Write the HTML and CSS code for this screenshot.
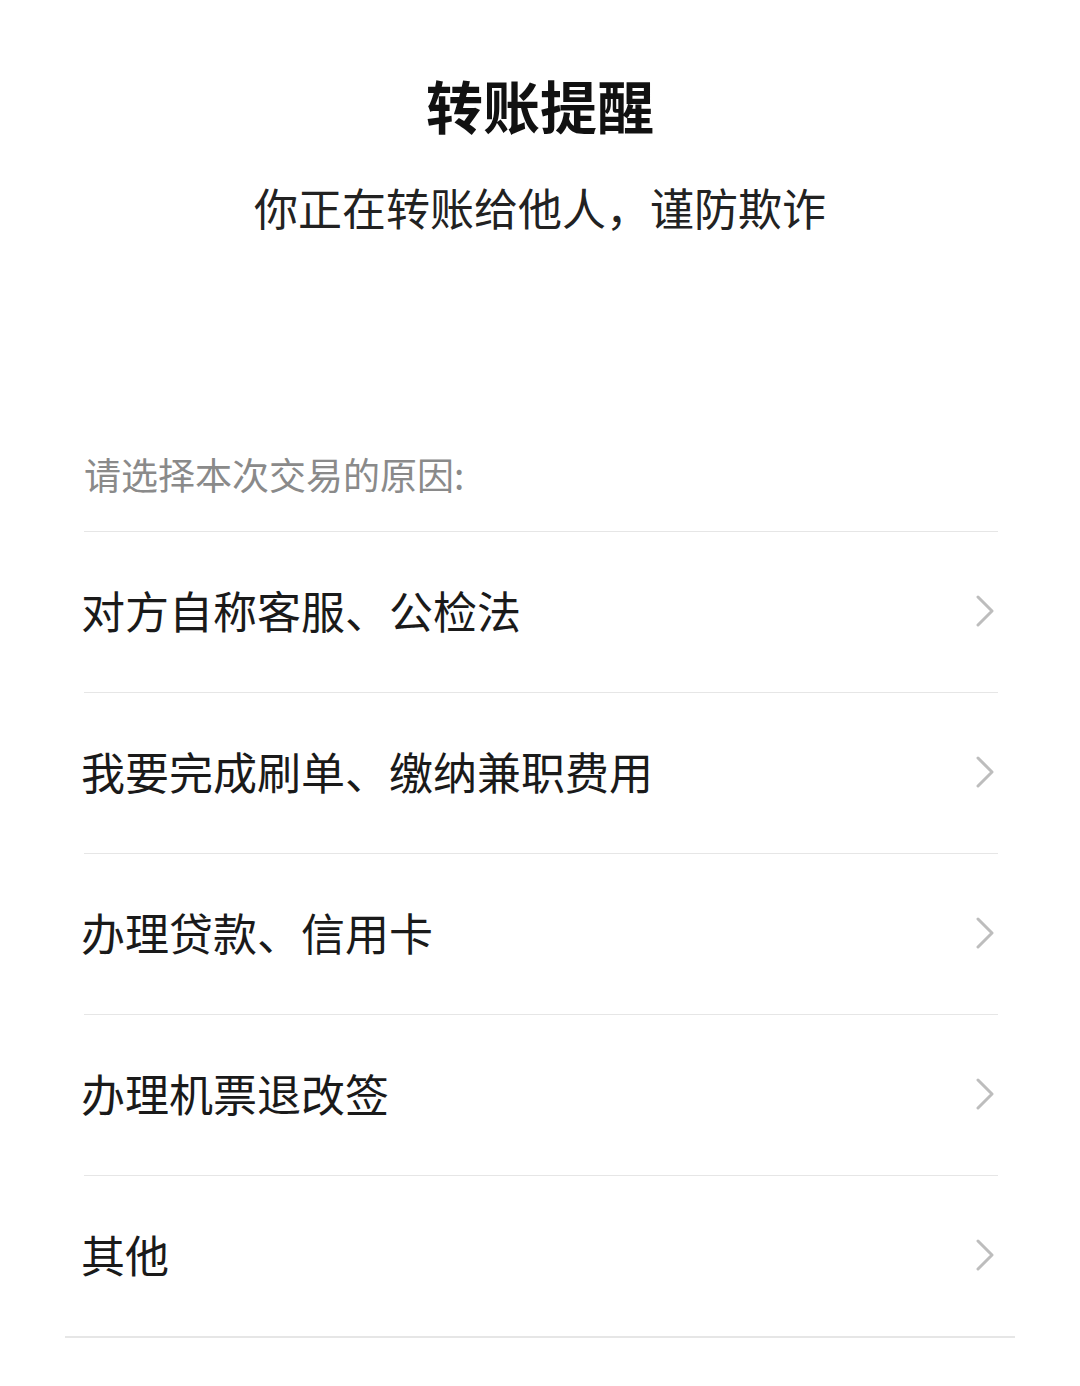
FILE: index.html
```html
<!DOCTYPE html>
<html lang="zh-CN">
<head>
    <meta charset="UTF-8">
    <meta name="viewport" content="width=device-width, initial-scale=1.0">
    <title>转账提醒</title>
    <link rel="stylesheet" href="styles.css">
</head>
<body>
    <div class="page">
        <!-- Header -->
        <div class="header">
            <h1>转账提醒</h1>
            <p class="subtitle">你正在转账给他人，谨防欺诈</p>
        </div>

        <!-- Reasons -->
        <div class="reasons">
            <div class="prompt">请选择本次交易的原因:</div>
            <div class="reason-list">
                <div class="reason">
                    <span>对方自称客服、公检法</span>
                    <svg class="chevron" viewBox="0 0 20 32"><path d="M3 2 L17 16 L3 30"/></svg>
                </div>
                <div class="reason">
                    <span>我要完成刷单、缴纳兼职费用</span>
                    <svg class="chevron" viewBox="0 0 20 32"><path d="M3 2 L17 16 L3 30"/></svg>
                </div>
                <div class="reason">
                    <span>办理贷款、信用卡</span>
                    <svg class="chevron" viewBox="0 0 20 32"><path d="M3 2 L17 16 L3 30"/></svg>
                </div>
                <div class="reason">
                    <span>办理机票退改签</span>
                    <svg class="chevron" viewBox="0 0 20 32"><path d="M3 2 L17 16 L3 30"/></svg>
                </div>
                <div class="reason">
                    <span>其他</span>
                    <svg class="chevron" viewBox="0 0 20 32"><path d="M3 2 L17 16 L3 30"/></svg>
                </div>
            </div>
        </div>
        <div class="bottom-line"></div>
    </div>
</body>
</html>
```

FILE: styles.css
```css
body {
    margin: 0;
    padding: 0;
    background-color: #fff;
    font-family: "Noto Sans CJK SC", "Noto Sans", sans-serif;
    color: #1a1a1a;
}

.page {
    width: 1080px;
    height: 1386px;
    overflow: hidden;
}

.header {
    padding-top: 69px;
    text-align: center;
}

.header h1 {
    margin: 0;
    font-size: 57px;
    line-height: 70px;
    font-weight: 700;
    color: #111;
}

.subtitle {
    margin: 38px 0 0;
    font-size: 44px;
    line-height: 60px;
    color: #222;
}

.reasons {
    margin: 212px 82px 0 84px;
}

.prompt {
    font-size: 37px;
    line-height: 50px;
    color: #8a8a8a;
    padding-bottom: 32px;
    border-bottom: 1px solid #e6e6e6;
}

.reason {
    display: flex;
    align-items: center;
    justify-content: space-between;
    height: 160px;
    border-bottom: 1px solid #e6e6e6;
    font-size: 44px;
    cursor: pointer;
}

.reason:last-child {
    border-bottom: none;
}

.reason span {
    margin-left: -3px;
    padding-bottom: 4px;
    color: #1a1a1a;
}

.chevron {
    width: 20px;
    height: 32px;
    margin-right: 3px;
    padding-bottom: 2px;
}

.chevron path {
    fill: none;
    stroke: #bdbdbd;
    stroke-width: 3;
    stroke-linecap: round;
    stroke-linejoin: round;
}

.bottom-line {
    margin: 0 65px;
    border-top: 2px solid #e6e6e6;
}
```
